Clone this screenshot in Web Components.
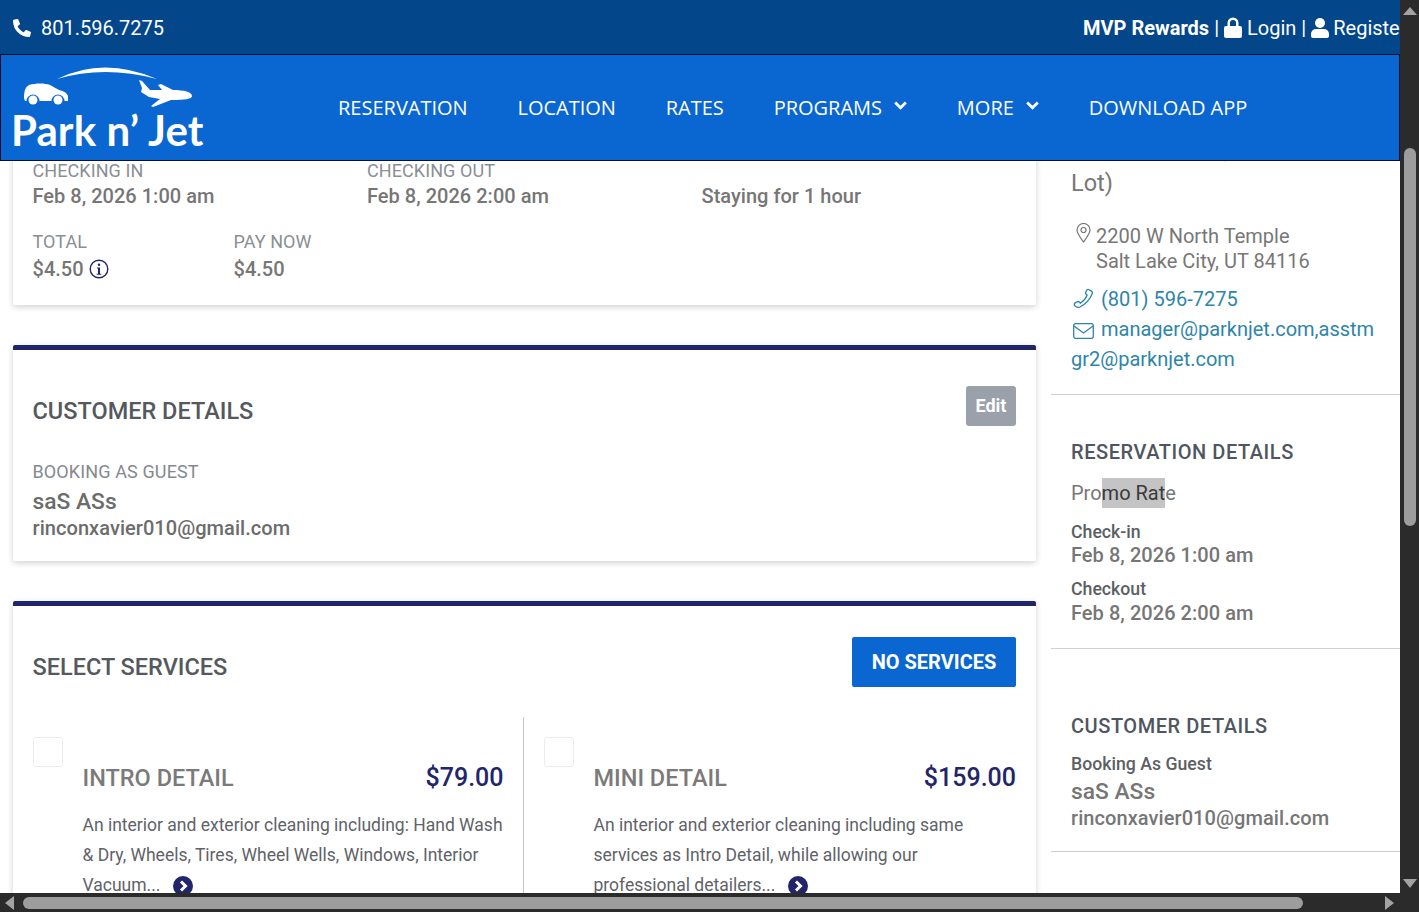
<!DOCTYPE html>
<html lang="en">
<head>
<meta charset="utf-8">
<title>Park n' Jet</title>
<style>
html,body{margin:0;padding:0;width:100%;height:100%;overflow:hidden;background:#fff}
body{font-family:Roboto,"Liberation Sans",sans-serif}
</style>
</head>
<body>
<app-frame>
  <top-bar slot="top"></top-bar>
  <main-nav slot="nav"></main-nav>
  <booking-column slot="left">
    <info-card flush>
      <summary-grid></summary-grid>
    </info-card>
    <info-card accent>
      <customer-card></customer-card>
    </info-card>
    <info-card accent open-bottom>
      <services-card></services-card>
    </info-card>
  </booking-column>
  <side-column slot="right"></side-column>
</app-frame>

<script>
function tpl(css, html){const t=document.createElement('template');t.innerHTML='<style>'+css+'</style>'+html;return t;}
function def(name,css,html){
  const t=tpl(css,html);
  customElements.define(name,class extends HTMLElement{
    constructor(){super();this.attachShadow({mode:'open'}).appendChild(t.content.cloneNode(true));}
  });
}

def('app-frame',`
:host{display:grid;grid-template-columns:1400px 19px;grid-template-rows:893px 19px;width:1419px;height:912px;background:#2b2b2b;overflow:hidden}
.page{grid-column:1;grid-row:1;display:flex;flex-direction:column;background:#fff;overflow:hidden;min-height:0}
.scroll{flex:1;min-height:0;overflow:hidden;display:flex;gap:14px;padding:0 0 0 13px;align-items:flex-start}
.left{flex:0 0 1024px;display:block;margin-top:-23px}
.right{flex:0 0 349px;display:block;margin-top:-65px}
.v{grid-column:2;grid-row:1;display:flex;flex-direction:column;align-items:center;background:#2b2b2b;position:relative}
.v .up{width:0;height:0;border-left:7px solid transparent;border-right:7px solid transparent;border-bottom:8px solid #a3a3a3;margin-top:7px}
.v .gap{height:133px;flex:none}
.v .thumb{width:12px;height:378px;border-radius:6px;background:#9d9d9d;flex:none}
.v .sp{flex:1}
.v .down{width:0;height:0;border-left:7px solid transparent;border-right:7px solid transparent;border-top:9px solid #a3a3a3;margin-bottom:5px}
.h{grid-column:1 / span 2;grid-row:2;display:flex;align-items:center;background:#2b2b2b;padding:0 0 0 5px;box-sizing:border-box}
.h .l{width:0;height:0;border-top:7px solid transparent;border-bottom:7px solid transparent;border-right:9px solid #a3a3a3}
.h .thumb{width:1280px;height:12px;border-radius:6px;background:#9d9d9d;margin-left:9px}
.h .r{width:0;height:0;border-top:7px solid transparent;border-bottom:7px solid transparent;border-left:9px solid #a3a3a3;margin-left:82px}
`,`
<div class="page">
  <slot name="top"></slot>
  <slot name="nav"></slot>
  <div class="scroll">
    <div class="left"><slot name="left"></slot></div>
    <div class="right"><slot name="right"></slot></div>
  </div>
</div>
<div class="v"><div class="up"></div><div class="gap"></div><div class="thumb"></div><div class="sp"></div><div class="down"></div></div>
<div class="h"><div class="l"></div><div class="thumb"></div><div class="r"></div></div>
`);

def('top-bar',`
:host{display:flex;flex:none;height:55px;box-sizing:border-box;align-items:center;justify-content:space-between;background:#04468a;color:#fff;font:400 20px/24px Roboto,sans-serif;padding:0 0 0 13px;overflow:hidden;white-space:nowrap}
.ph{display:flex;align-items:center;gap:10px}
.r{display:flex;align-items:center;gap:5px;flex:none;width:317px;overflow:hidden}
b{font-weight:700}
svg{display:block;fill:#fff;flex:none}
.tight{margin-right:-1px}
`,`
<div class="ph">
  <svg width="18" height="18" viewBox="0 0 512 512"><path d="M493 24 389 0c-11-3-23 3-27 14l-48 112c-4 10-1 21 7 28l61 50c-36 76-98 139-176 176l-50-61c-7-8-18-11-28-7L16 360c-11 5-17 17-14 28l24 104c2 11 12 20 24 20 256 0 462-206 462-464 0-12-8-21-19-24z" transform="matrix(-1 0 0 1 512 0)"/></svg>
  <span>801.596.7275</span>
</div>
<div class="r">
  <b>MVP Rewards</b><span>|</span>
  <svg width="18" height="21" viewBox="0 0 18 21"><path d="M3.500 9V6a5.500 5.500 0 0 1 11 0v3h1.500A2 2 0 0 1 18 11v8a2 2 0 0 1-2 2H2a2 2 0 0 1-2-2v-8a2 2 0 0 1 2-2zM6 9h6V6a3 3 0 0 0-6 0z"/></svg>
  <span>Login</span><span>|</span>
  <svg class="tight" width="18" height="20" viewBox="0 0 18 20"><circle cx="9" cy="5" r="5"/><path d="M5 11h8a5 5 0 0 1 5 5v2a2 2 0 0 1-2 2H2a2 2 0 0 1-2-2v-2a5 5 0 0 1 5-5z"/></svg>
  <span>Register</span>
</div>
`);

def('main-nav',`
:host{display:flex;flex:none;height:107px;box-sizing:border-box;align-items:center;background:#0a66d0;border:1px solid #02102a;color:#fff;font:400 20px/24px "Open Sans",sans-serif;white-space:nowrap;position:relative;z-index:2;margin-top:-1px}
.logo{flex:none;width:337px;padding-left:11px;box-sizing:border-box;display:flex;flex-direction:column;height:100%;overflow:hidden}
.logo svg{display:block;flex:none;margin-top:7px}
.name{font:700 42px/44px Lato,"Open Sans",sans-serif;color:#fff;margin-top:-2px;letter-spacing:.1px;margin-left:-1px}
nav{display:flex;align-items:center;gap:49.800px}
.i{display:flex;align-items:center;gap:12px}
.i svg{display:block;margin-top:-4px}
`,`
<div class="logo">
  <svg width="192" height="48" viewBox="13 62 192 48" fill="#fff">
    <path d="M58 79Q105 56 158 79Q105 65 58 79z"/>
    <path d="M25 98C25 92 26 87 30 85C37 83 46 83 51 85C55 87 58 89 60 90C65 91 68 93 69 96L69 101L65.500 101A6.500 6.500 0 0 0 52.500 101L40.500 101A6.500 6.500 0 0 0 27.500 101L26 101z"/>
    <circle cx="34" cy="100" r="4.500"/><circle cx="59" cy="100" r="4.500"/>
    <path d="M140 80L143 81L151 90L163 90L159 85L162 84L174 90C185 90 193 92 193 96C193 99 186 100 172 100L154 107L152 106L161 99L150 97L142 92L143 88z"/>
  </svg>
  <div class="name">Park n’ Jet</div>
</div>
<nav>
  <span>RESERVATION</span><span>LOCATION</span><span>RATES</span>
  <span class="i">PROGRAMS <svg width="13" height="9" viewBox="0 0 13 9"><path d="M1.200 1.500l5.300 5.300 5.300-5.300" fill="none" stroke="#fff" stroke-width="2.800"/></svg></span>
  <span class="i">MORE <svg width="13" height="9" viewBox="0 0 13 9"><path d="M1.200 1.500l5.300 5.300 5.300-5.300" fill="none" stroke="#fff" stroke-width="2.800"/></svg></span>
  <span>DOWNLOAD APP</span>
</nav>
`);

def('booking-column',`:host{display:flex;flex-direction:column;gap:40px;width:1023px}`,`<slot></slot>`);

def('info-card',`
:host{display:block;background:#fff;box-shadow:0 2px 6px rgba(0,0,0,.18);border-radius:2px;box-sizing:border-box;padding:0 20px 0 19.500px}
:host([accent]){border-top:5px solid #23256b}
`,`<slot></slot>`);

def('summary-grid',`
:host{display:block;height:167px;padding-top:22px;box-sizing:border-box;color:#7b7f84;font:400 18px/22px Roboto,sans-serif}
.row{display:flex}
.c{flex:0 0 334.500px}
.c2{flex:0 0 201px}
.l{color:#8a8f94;display:block;height:23px;letter-spacing:.08px}
.row+.row .l{height:25px}
.v{font-weight:500;font-size:20px;line-height:26px;color:#767676;display:flex;align-items:center;gap:5px;white-space:nowrap;letter-spacing:.02px}
.row+.row{margin-top:22px}
svg{display:block}
.spacer{height:23px}
`,`
<div class="row">
  <div class="c"><span class="l">CHECKING IN</span><span class="v">Feb 8, 2026 1:00 am</span></div>
  <div class="c"><span class="l">CHECKING OUT</span><span class="v">Feb 8, 2026 2:00 am</span></div>
  <div class="c"><div class="spacer"></div><span class="v">Staying for 1 hour</span></div>
</div>
<div class="row">
  <div class="c2"><span class="l">TOTAL</span><span class="v">$4.50
    <svg width="20" height="20" viewBox="0 0 20 20"><circle cx="10" cy="10" r="8.800" fill="none" stroke="#23256b" stroke-width="1.400"/><circle cx="10" cy="5.800" r="1.200" fill="#23256b"/><path d="M8 8.500h3v6.200h1.300v1.100H7.700v-1.100H9V9.600H8z" fill="#23256b"/></svg>
  </span></div>
  <div class="c2"><span class="l">PAY NOW</span><span class="v">$4.50</span></div>
</div>
`);

def('customer-card',`
:host{display:block;height:211px;box-sizing:border-box;position:relative;color:#777;font-family:Roboto,sans-serif}
.head{display:flex;justify-content:space-between;align-items:flex-start;padding-top:36px}
h2{margin:0;font:500 23.500px/40px Roboto,sans-serif;color:#55595e;padding-top:5px}
.edit{width:50px;height:40px;background:#9aa1ab;border-radius:3px;color:#fff;font:700 18px/40px Roboto,sans-serif;text-align:center}
.lbl{font-size:18px;line-height:22px;color:#85898e;margin-top:30px;letter-spacing:.12px}
.nm{font-size:22.800px;font-weight:500;line-height:29px;color:#6c6c6c;margin-top:4px}
.em{font-size:20px;font-weight:500;line-height:24px;color:#6c6c6c;letter-spacing:.06px}
`,`
<div class="head"><h2>CUSTOMER DETAILS</h2><div class="edit">Edit</div></div>
<div class="lbl">BOOKING AS GUEST</div>
<div class="nm">saS ASs</div>
<div class="em">rinconxavier010@gmail.com</div>
`);

def('services-card',`
:host{display:block;font-family:Roboto,sans-serif;height:320px;overflow:hidden}
.head{display:flex;justify-content:space-between;align-items:center;padding-top:31px;height:50px}
h2{margin:0;font:500 23.500px/30px Roboto,sans-serif;color:#55595e;padding-top:10px}
.btn{width:164px;height:50px;background:#0a66d0;border-radius:2px;color:#fff;font:700 20px/50px Roboto,sans-serif;text-align:center}
.grid{display:grid;grid-template-columns:490px 493.500px;margin-top:30px}
.s{display:flex;height:190px}
.s+.s{border-left:1px solid #c6c6c6;padding-left:20px}
.cb{flex:none;width:30px;height:30px;box-sizing:border-box;border:1px solid #ececec;border-radius:3px;margin:20px 20px 0 0}
.b{flex:1;padding-top:48px;min-width:0}
.t{display:flex;justify-content:space-between;align-items:center;font:500 23.500px/24px Roboto,sans-serif;color:#7a7a7a;white-space:nowrap}
.p{font-size:25px;color:#23256b;padding-top:1px}
.d{font:400 17.500px/30px Roboto,sans-serif;color:#5f6368;margin-top:20px}
.m{display:inline-block;width:20px;height:20px;vertical-align:-5px;margin-left:8px}
.b1{padding-right:19px}
.b1 .d{margin-right:-3px}
.b2{padding-right:0}
`,`
<div class="head"><h2>SELECT SERVICES</h2><div class="btn">NO SERVICES</div></div>
<div class="grid">
  <div class="s">
    <div class="cb"></div>
    <div class="b b1">
      <div class="t"><span>INTRO DETAIL</span><span class="p">$79.00</span></div>
      <div class="d">An interior and exterior cleaning including: Hand Wash &amp; Dry, Wheels, Tires, Wheel Wells, Windows, Interior Vacuum... <svg class="m" viewBox="0 0 20 20"><circle cx="10" cy="10" r="10" fill="#23256b"/><path d="M8 5.500l4.500 4.500L8 14.500" fill="none" stroke="#fff" stroke-width="3"/></svg></div>
    </div>
  </div>
  <div class="s">
    <div class="cb"></div>
    <div class="b b2">
      <div class="t"><span>MINI DETAIL</span><span class="p">$159.00</span></div>
      <div class="d">An interior and exterior cleaning including same services as Intro Detail, while allowing our professional detailers... <svg class="m" viewBox="0 0 20 20"><circle cx="10" cy="10" r="10" fill="#23256b"/><path d="M8 5.500l4.500 4.500L8 14.500" fill="none" stroke="#fff" stroke-width="3"/></svg></div>
    </div>
  </div>
</div>
`);

def('side-column',`
:host{display:block;font-family:Roboto,sans-serif;color:#777}
section{padding:0 20px;border-bottom:1px solid #cfcfcf}
.loc{height:299px;box-sizing:border-box;padding-top:35px}
.name{font:400 23.500px/35px Roboto,sans-serif;color:#777}
.addr{display:flex;font:400 20px/25px Roboto,sans-serif;margin-top:23px;color:#777}
.addr svg{flex:none;margin:-1px 5px 0 5px}
.ln{font:400 20px/30px Roboto,sans-serif;color:#2e85a8;word-break:break-all}
.ln svg{vertical-align:-3px;margin:0 7px 0 2px}
.ph{margin-top:10px}
h3{margin:0;font:500 20px/26px Roboto,sans-serif;color:#505660;letter-spacing:.55px}
.res{height:254px;box-sizing:border-box;padding-top:44px}
.promo{font:400 20px/30px Roboto,sans-serif;margin-top:13px;color:#777}
mark{background:#c4c4c4;color:#3a3a3a;display:inline-block;line-height:30px}
.k{font:500 17.700px/22px Roboto,sans-serif;color:#5b5f64}
.v{font:500 20px/24px Roboto,sans-serif;color:#767676;letter-spacing:.05px}
.k.a{margin-top:13px}.k.b{margin-top:11px}.k.b+.v{margin-top:1px}
.cust{height:203px;box-sizing:border-box;padding-top:64px}
.g{font:500 17.700px/22px Roboto,sans-serif;color:#5b5f64;margin-top:14px}
.n{font:500 22.800px/32px Roboto,sans-serif;color:#767676;padding-top:1px}
.e{font:500 20px/24px Roboto,sans-serif;color:#767676;margin-top:-2px;letter-spacing:.08px}
`,`
<section class="loc">
  <div class="name">Salt Lake City (Main<br>Lot)</div>
  <div class="addr">
    <svg width="15" height="20" viewBox="0 0 15 20" fill="none" stroke="#777" stroke-width="1.200"><path d="M7.500 19C3.500 13.500 1 10.500 1 7a6.500 6.500 0 0 1 13 0C14 10.500 11.500 13.500 7.500 19z"/><circle cx="7.500" cy="7" r="2.500"/></svg>
    <div>2200 W North Temple<br>Salt Lake City, UT 84116</div>
  </div>
  <div class="ln ph"><svg width="21" height="21" viewBox="0 0 21 21" fill="none" stroke="#2e85a8" stroke-width="1.300"><path d="M13.500 2.500c.6-1 1.700-1.300 2.600-.8l2.300 1.400c.9.600 1.200 1.700.7 2.800C17 11 12.500 16 7 19c-1.200.6-3 .5-4.200-.4l-1-.9c-.8-.8-.7-2 .2-2.600l1.900-1.200c.9-.6 2-.4 2.700.4l.8.9c2.800-1.800 5.500-5 6.700-8l-1-1c-.6-.6-.7-1.400-.3-2z"/></svg>(801) 596-7275</div>
  <div class="ln"><svg width="21" height="16" viewBox="0 0 21 16" fill="none" stroke="#2e85a8" stroke-width="1.300"><rect x=".7" y=".7" width="19.600" height="14.600" rx="2"/><path d="M1 3l9.500 7L20 3"/></svg>manager@parknjet.com,asstmgr2@parknjet.com</div>
</section>
<section class="res">
  <h3>RESERVATION DETAILS</h3>
  <div class="promo">Pro<mark>mo Rat</mark>e</div>
  <div class="k a">Check-in</div><div class="v">Feb 8, 2026 1:00 am</div>
  <div class="k b">Checkout</div><div class="v">Feb 8, 2026 2:00 am</div>
</section>
<section class="cust">
  <h3>CUSTOMER DETAILS</h3>
  <div class="g">Booking As Guest</div>
  <div class="n">saS ASs</div>
  <div class="e">rinconxavier010@gmail.com</div>
</section>
`);
</script>
</body>
</html>
